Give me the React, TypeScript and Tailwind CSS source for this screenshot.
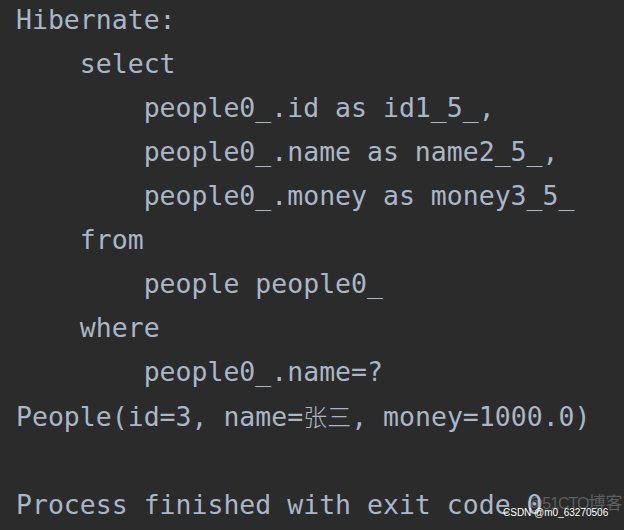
const LINES: { indent: number; text: string }[] = [
  { indent: 0, text: "Hibernate:" },
  { indent: 4, text: "select" },
  { indent: 8, text: "people0_.id as id1_5_," },
  { indent: 8, text: "people0_.name as name2_5_," },
  { indent: 8, text: "people0_.money as money3_5_" },
  { indent: 4, text: "from" },
  { indent: 8, text: "people people0_" },
  { indent: 4, text: "where" },
  { indent: 8, text: "people0_.name=?" },
];

function App() {
  return (
    <div className="relative w-[624px] h-[530px] overflow-hidden bg-[#2b2b2b] text-[#a9b7c6] font-['DejaVu_Sans_Mono',monospace] text-[26.5px] leading-[44px] pl-4">
      <div className="-mt-[2px]">
        {LINES.map((line, i) => (
          <div key={i} className="whitespace-pre">
            {" ".repeat(line.indent) + line.text}
          </div>
        ))}
        <div className="whitespace-pre">
          People(id=3, name=
          <span className="text-[24px] font-light font-['Noto_Sans_CJK_SC',sans-serif]">张三</span>
          , money=1000.0)
        </div>
        <div className="h-[44px]" />
        <div className="whitespace-pre">Process finished with exit code 0</div>
      </div>

      <div className="absolute left-[527px] top-[492px] text-[16px] leading-[24px] tracking-[-1px] text-white/25 font-['Liberation_Sans','Noto_Sans_CJK_SC',sans-serif] whitespace-nowrap">
        @51CTO<span className="text-[17px] tracking-normal">博客</span>
      </div>
      <div className="absolute left-[503px] top-[507px] text-[10px] leading-[12px] text-white font-['Liberation_Sans',sans-serif] whitespace-nowrap">
        CSDN @m0_63270506
      </div>
    </div>
  );
}

export default App;
